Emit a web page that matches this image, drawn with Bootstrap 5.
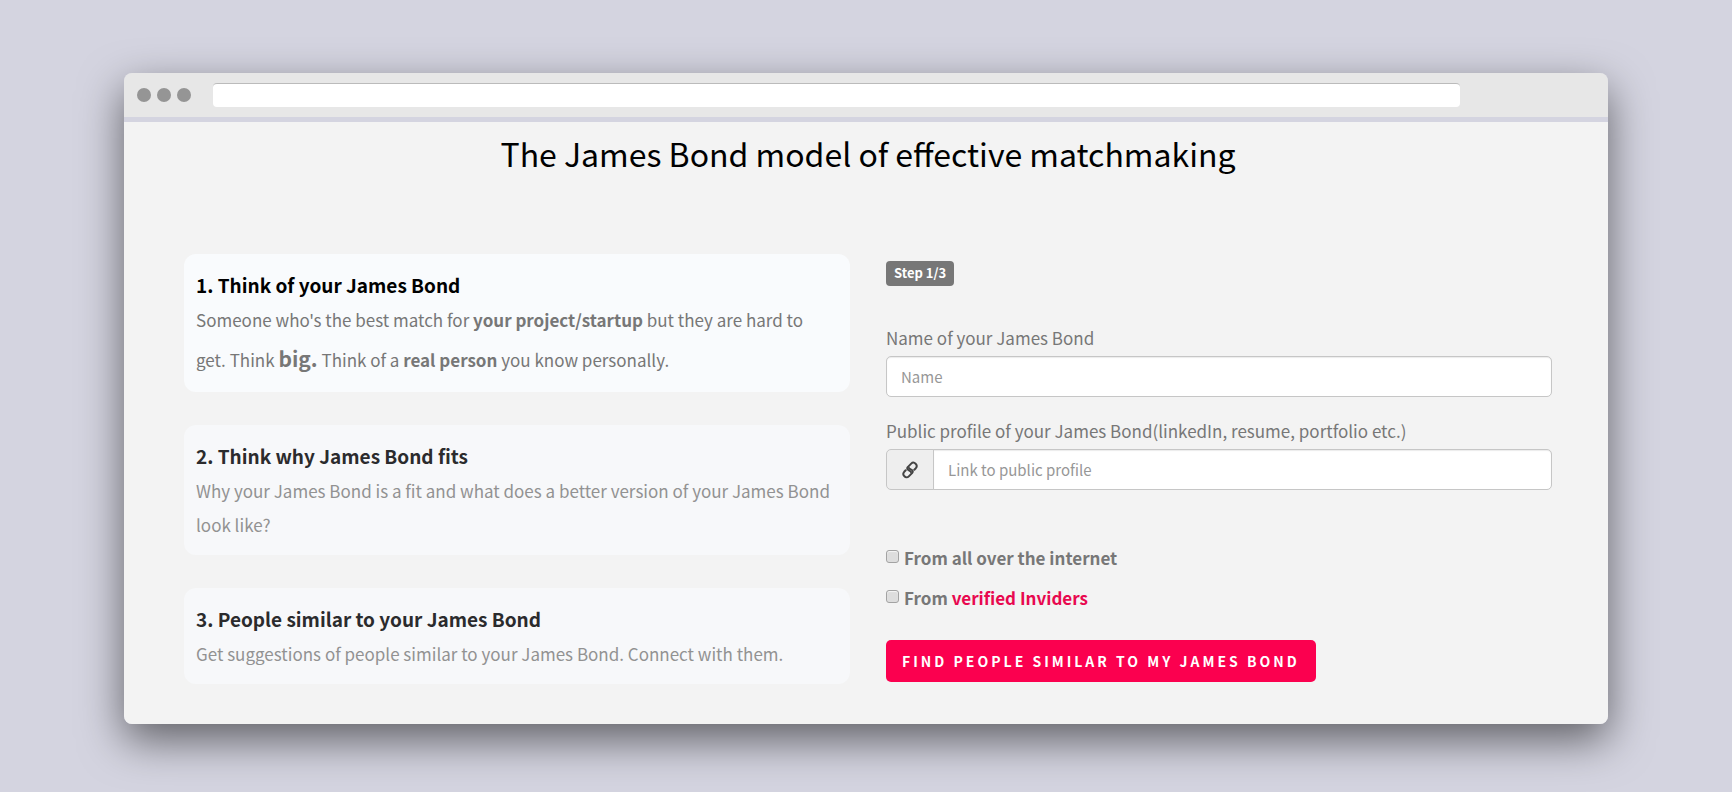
<!DOCTYPE html>
<html lang="en">
<head>
<meta charset="utf-8">
<meta name="viewport" content="width=device-width, initial-scale=1">
<title>The James Bond model of effective matchmaking</title>
<link href="https://cdn.jsdelivr.net/npm/bootstrap@5.3.0/dist/css/bootstrap.min.css" rel="stylesheet">
<style>
  body { background: #d4d4e0; color: #777; font-family: "Noto Sans CJK JP", "Noto Sans CJK SC", sans-serif; font-size: 17px; line-height: 34px; }
  .stage { padding: 73px 16px 68px; }
  .browser { border-radius: 8px; box-shadow: 0 16px 44px rgba(0, 0, 0, .55); }
  .browser-bar { background: #e7e7e7; height: 44px; padding-left: 13px; border-radius: 8px 8px 0 0; }
  .dots { gap: 6px; }
  .dot { width: 14px; height: 14px; background: #959595; }
  .address { height: 24px; margin: 0 148px 0 22px; background: #fff; border: 0; border-top: 1px solid #bbb; border-radius: 4px; }
  .browser-page { background: #f3f3f3; border-top: 5px solid #d4d4e0; border-radius: 0 0 8px 8px; padding: 9px 16px 40px; }
  .page-title { color: #000; font-size: 32px; line-height: 44px; margin-bottom: 79px; font-weight: 400; }
  .columns { --bs-gutter-x: 36px; }
  .steps { gap: 33px; }
  .step { background: #f7f8fa; color: #929292; border-radius: 12px; padding: 13px 18px 13px 12px; }
  .step h2 { color: #2b2b2d; font-size: 19px; line-height: 35px; font-weight: 700; margin: 0 0 1px; }
  .step.current { background: #f9fbfd; color: #777; }
  .step.current h2 { color: #000; }
  .big { font-size: 21px; line-height: 42px; }
  .step-badge { background: #777; border-radius: 4px; font-size: 13px; line-height: 17px; padding: 3px 8px 5px; margin: 7px 0 35px; }
  .field { margin-bottom: 17px; }
  .form-label { line-height: 34px; margin: 0 0 1px; }
  .form-control, .form-control:focus { height: 41px; font-size: 15px; line-height: 24px; padding: 7px 14px; border-color: #c6c6c6; border-radius: 5px; box-shadow: inset 0 1px 1px rgba(0, 0, 0, .08); }
  .form-control::placeholder { color: #979797; }
  .input-group-text { width: 48px; background: #eee; border-color: #c6c6c6; border-radius: 5px; color: #444; }
  .checks { padding-top: 51px; gap: 6px; }
  .checks label { font-weight: 700; }
  .checks .form-check-input { width: 13px; height: 13px; margin: 0 5px 4px 0; border: 1px solid #a3a3a3; border-radius: 3px; background-color: #ddd; box-shadow: inset 0 1px 1px #f6f6f6; }
  .checks a { color: #e8084f; }
  .btn-find { --bs-btn-color: #fff; --bs-btn-bg: #fb004f; --bs-btn-hover-color: #fff; --bs-btn-hover-bg: #dc0045; --bs-btn-border-width: 0; --bs-btn-border-radius: 5px; --bs-btn-font-weight: 700; --bs-btn-font-size: 14px; --bs-btn-padding-x: 16px; --bs-btn-padding-y: 9px; --bs-btn-line-height: 24px; letter-spacing: 3px; margin-top: 25px; }
  @media (min-width: 992px) {
    .stage { padding-left: 124px; padding-right: 124px; }
    .browser-page { padding-left: 60px; padding-right: 56px; }
  }
</style>
</head>
<body>
<div class="stage">
  <div class="browser">
    <div class="browser-bar d-flex align-items-center">
      <div class="dots d-flex flex-shrink-0">
        <span class="dot rounded-circle"></span>
        <span class="dot rounded-circle"></span>
        <span class="dot rounded-circle"></span>
      </div>
      <input type="text" class="address flex-grow-1" aria-label="Address">
    </div>
    <main class="browser-page">
      <h1 class="page-title text-center">The James Bond model of effective matchmaking</h1>
      <div class="row columns">
        <div class="col-lg-6">
          <div class="steps d-flex flex-column">
            <section class="step current">
              <h2>1. Think of your James Bond</h2>
              <p class="mb-0">Someone who's the best match for <strong>your project/startup</strong> but they are hard to get. Think <strong class="big">big.</strong> Think of a <strong>real person</strong> you know personally.</p>
            </section>
            <section class="step">
              <h2>2. Think why James Bond fits</h2>
              <p class="mb-0">Why your James Bond is a fit and what does a better version of your James Bond look like?</p>
            </section>
            <section class="step">
              <h2>3. People similar to your James Bond</h2>
              <p class="mb-0">Get suggestions of people similar to your James Bond. Connect with them.</p>
            </section>
          </div>
        </div>
        <form class="col-lg-6">
          <div class="d-flex"><span class="badge step-badge">Step 1/3</span></div>
          <div class="field">
            <label class="form-label" for="bond-name">Name of your James Bond</label>
            <input type="text" class="form-control" id="bond-name" placeholder="Name">
          </div>
          <div>
            <label class="form-label" for="bond-link">Public profile of your James Bond(linkedIn, resume, portfolio etc.)</label>
            <div class="input-group">
              <span class="input-group-text justify-content-center p-0">
                <svg width="16" height="18" viewBox="0 0 16 18" fill="none" stroke="currentColor" stroke-width="2" stroke-linecap="round" stroke-linejoin="round" aria-hidden="true">
                  <path d="M9 11C8.800 9.500 5.200 9.500 5.200 7.600C5.200 6.800 5.500 6.500 6 5.900L9.200 2.600C10.600 1.200 12.400 1.500 13.600 2.700C14.900 4 15 5.800 13.800 7.200L12.300 8.800"/>
                  <path d="M7 7C7.200 8.500 10.800 8.500 10.800 10.400C10.800 11.200 10.500 11.500 10 12.100L6.800 15.400C5.400 16.800 3.600 16.500 2.400 15.300C1.100 14 1 12.200 2.200 10.800L3.700 9.200"/>
                </svg>
              </span>
              <input type="text" class="form-control" id="bond-link" placeholder="Link to public profile">
            </div>
          </div>
          <div class="checks d-flex flex-column">
            <div class="d-flex align-items-center">
              <input class="form-check-input" type="checkbox" id="from-web">
              <label for="from-web">From all over the internet</label>
            </div>
            <div class="d-flex align-items-center">
              <input class="form-check-input" type="checkbox" id="from-inviders">
              <label for="from-inviders">From <a href="#" class="text-decoration-none">verified Inviders</a></label>
            </div>
          </div>
          <button type="button" class="btn btn-find text-uppercase">Find people similar to my James Bond</button>
        </form>
      </div>
    </main>
  </div>
</div>
<script src="https://cdn.jsdelivr.net/npm/bootstrap@5.3.0/dist/js/bootstrap.bundle.min.js"></script>
</body>
</html>
